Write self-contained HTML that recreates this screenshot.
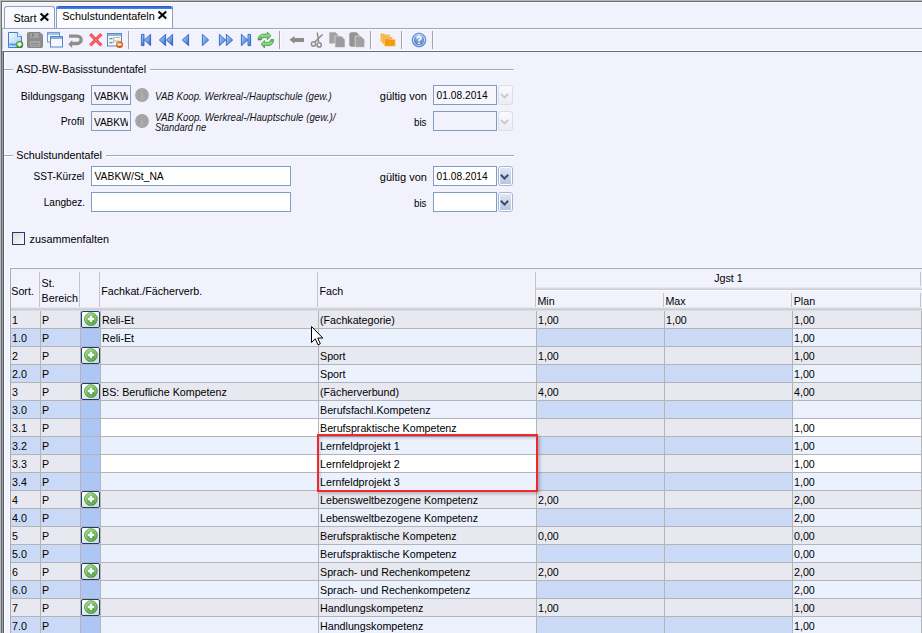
<!DOCTYPE html>
<html><head><meta charset="utf-8"><style>
*{margin:0;padding:0;box-sizing:border-box}
html,body{width:922px;height:633px;overflow:hidden;background:#f2f2fd;font-family:"Liberation Sans",sans-serif;color:#000}
.t{position:absolute;white-space:nowrap;line-height:20px}
.r{position:absolute}
svg{position:absolute;overflow:visible}
</style></head>
<body>
<div class="r" style="left:0px;top:0px;width:922px;height:1px;background:#b8b8b8;"></div>
<div class="r" style="left:0px;top:1px;width:922px;height:1px;background:#6e6e6e;"></div>
<div class="r" style="left:0px;top:0px;width:1px;height:633px;background:#b8b8b8;"></div>
<div class="r" style="left:1px;top:1px;width:1px;height:633px;background:#6e6e6e;"></div>
<div class="r" style="left:2px;top:2px;width:920px;height:1px;background:#fcfcff;"></div>
<div class="r" style="left:2px;top:2px;width:1px;height:50px;background:#fcfcff;"></div>
<div class="r" style="left:4px;top:6px;width:51px;height:22px;background:#f9f9fe;border:1px solid #8fa0ba;border-bottom:none;border-radius:3px 3px 0 0"></div>
<div class="t" style="left:13.6px;top:8.04px;font-size:10.85px;">Start</div>
<div class="r" style="left:56px;top:6px;width:117px;height:22px;background:#fdfdff;border:1px solid #8fa0ba;border-top:none;border-bottom:none"></div>
<div class="r" style="left:56px;top:6px;width:117px;height:3px;background:linear-gradient(#2457c2,#4a86ee);clip-path:polygon(2px 0,calc(100% - 2px) 0,100% 100%,0 100%)"></div>
<div class="t" style="left:62.3px;top:5.93px;font-size:10.88px;">Schulstundentafeln</div>
<div class="r" style="left:2px;top:28px;width:920px;height:1px;background:#98a8c2;"></div>
<div class="r" style="left:2px;top:29px;width:920px;height:1px;background:#fbfbff;"></div>
<svg style="left:39.8px;top:12.8px" width="9" height="8" viewBox="0 0 9 8"><rect x="-1" y="-1" width="11" height="10" fill="#e8e8f0" opacity="0.35"/><path d="M0.6 0.6L8.2 7.4M8.2 0.6L0.6 7.4" stroke="#000" stroke-width="2.05"/></svg>
<svg style="left:157.8px;top:10.8px" width="9" height="8" viewBox="0 0 9 8"><rect x="-1" y="-1" width="11" height="10" fill="#e8e8f0" opacity="0.35"/><path d="M0.6 0.6L8.2 7.4M8.2 0.6L0.6 7.4" stroke="#000" stroke-width="2.05"/></svg>
<div class="r" style="left:2px;top:29px;width:1px;height:22px;background:#c4cde0;"></div>
<div class="r" style="left:2px;top:50px;width:920px;height:1px;background:#fcfcff;"></div>
<div class="r" style="left:2px;top:51px;width:920px;height:1px;background:#6e6e6e;"></div>
<div class="r" style="left:2px;top:52px;width:1px;height:581px;background:#8c9cb8;"></div>
<div class="r" style="left:3px;top:52px;width:1px;height:581px;background:#5e5e5e;"></div>
<div class="r" style="left:4px;top:52px;width:1px;height:581px;background:#fcfcff;"></div>
<div class="r" style="left:128px;top:31px;width:1px;height:18px;background:#a2a2aa;"></div>
<div class="r" style="left:129px;top:31px;width:1px;height:18px;background:#fafaff;"></div>
<div class="r" style="left:279px;top:31px;width:1px;height:18px;background:#a2a2aa;"></div>
<div class="r" style="left:280px;top:31px;width:1px;height:18px;background:#fafaff;"></div>
<div class="r" style="left:370px;top:31px;width:1px;height:18px;background:#a2a2aa;"></div>
<div class="r" style="left:371px;top:31px;width:1px;height:18px;background:#fafaff;"></div>
<div class="r" style="left:401px;top:31px;width:1px;height:18px;background:#a2a2aa;"></div>
<div class="r" style="left:402px;top:31px;width:1px;height:18px;background:#fafaff;"></div>
<div class="r" style="left:432px;top:31px;width:1px;height:18px;background:#a2a2aa;"></div>
<div class="r" style="left:433px;top:31px;width:1px;height:18px;background:#fafaff;"></div>
<svg style="left:8px;top:32px" width="16" height="16" viewBox="0 0 16 16"><defs><linearGradient id="gdoc" x1="0" y1="0" x2="1" y2="1"><stop offset="0" stop-color="#f2f8fe"/><stop offset="1" stop-color="#a6ccf2"/></linearGradient><radialGradient id="ggr" cx="0.4" cy="0.35" r="0.7"><stop offset="0" stop-color="#7cc35e"/><stop offset="1" stop-color="#2e7d1e"/></radialGradient></defs><path d="M0.5 0.5H9.5L13.5 4.5V15.5H0.5Z" fill="url(#gdoc)" stroke="#3f7dd0"/><path d="M9.5 0.5V4.5H13.5" fill="#fff" stroke="#3f7dd0" stroke-width="0.8"/><rect x="1.5" y="11.5" width="9" height="2" fill="#4d9ae8"/><circle cx="11.6" cy="12.4" r="3.6" fill="url(#ggr)"/><path d="M11.6 10.3V14.5M9.5 12.4H13.7" stroke="#fff" stroke-width="1.6"/></svg>
<svg style="left:27px;top:32px" width="16" height="16" viewBox="0 0 16 16"><path d="M0.5 1.5Q0.5 0.5 1.5 0.5H13L15.5 3V14.5Q15.5 15.5 14.5 15.5H1.5Q0.5 15.5 0.5 14.5Z" fill="#8e8e8e" stroke="#858585"/><rect x="3.5" y="1" width="8" height="5" fill="#a4a4a4"/><rect x="5" y="1.5" width="1.5" height="3" fill="#7a7a7a"/><rect x="3" y="9" width="10" height="6" fill="#a6a6a6"/><rect x="4" y="11" width="8" height="1" fill="#8a8a8a"/><rect x="4" y="13" width="8" height="1" fill="#909090"/></svg>
<svg style="left:47px;top:32px" width="16" height="16" viewBox="0 0 16 16"><rect x="0.5" y="0.5" width="12" height="9.5" fill="#f3f6fb" stroke="#6f9ad6"/><rect x="1" y="1" width="11" height="2" fill="#a6c3ea"/><rect x="3.5" y="4.5" width="12" height="10.5" fill="#f5f7fb" stroke="#5586cc"/><rect x="4" y="5" width="11" height="2" fill="#86ade2"/></svg>
<svg style="left:68px;top:32px" width="16" height="16" viewBox="0 0 16 16"><path d="M1 4.2H9.5A3.65 3.65 0 0 1 9.5 11.5H3.5" fill="none" stroke="#8e8e8e" stroke-width="3.3"/><path d="M0.2 12.3L4.2 8V16Z" fill="#8e8e8e"/></svg>
<svg style="left:88px;top:32px" width="16" height="16" viewBox="0 0 16 16"><path d="M2.2 2.2L13.3 13.3M13.3 2.2L2.2 13.3" stroke="#f04a55" stroke-width="3.2"/><path d="M2.7 2.7L12.8 12.8M12.8 2.7L2.7 12.8" stroke="#ff8a90" stroke-width="0.8"/></svg>
<svg style="left:107px;top:32px" width="16" height="16" viewBox="0 0 16 16"><defs><radialGradient id="gor" cx="0.4" cy="0.35" r="0.7"><stop offset="0" stop-color="#f8a048"/><stop offset="1" stop-color="#c84a08"/></radialGradient></defs><rect x="0.5" y="1.5" width="14" height="12.5" fill="#f6f4ee" stroke="#5b87c5"/><rect x="1" y="2" width="13" height="2" fill="#8fb3e3"/><rect x="2.5" y="6" width="3" height="1.2" fill="#4f7fc4"/><rect x="2.5" y="10" width="3" height="1.2" fill="#4f7fc4"/><path d="M6.5 11V5.5H13M6.5 9H12" fill="none" stroke="#a8a8a8" stroke-width="0.8"/><circle cx="12.5" cy="12.5" r="3.5" fill="url(#gor)"/><rect x="10.5" y="11.8" width="4" height="1.5" fill="#fff"/></svg>
<svg style="left:140px;top:32px" width="16" height="16" viewBox="0 0 16 16"><defs><linearGradient id="gnav" x1="0" y1="0" x2="1" y2="1"><stop offset="0" stop-color="#b4d0f4"/><stop offset="0.5" stop-color="#7aa6e6"/><stop offset="1" stop-color="#2456c0"/></linearGradient></defs><rect x="1.4" y="2.4" width="2.6" height="11.2" fill="url(#gnav)" stroke="#2e62c8" stroke-width="0.9" stroke-linejoin="round"/><path d="M10.6 2.3V13.7L4.3 8Z" fill="url(#gnav)" stroke="#2e62c8" stroke-width="0.9" stroke-linejoin="round"/></svg>
<svg style="left:158px;top:32px" width="16" height="16" viewBox="0 0 16 16"><path d="M7.6 2.3V13.7L1.3 8Z" fill="url(#gnav)" stroke="#2e62c8" stroke-width="0.9" stroke-linejoin="round"/><path d="M14.6 2.3V13.7L8.3 8Z" fill="url(#gnav)" stroke="#2e62c8" stroke-width="0.9" stroke-linejoin="round"/></svg>
<svg style="left:179px;top:32px" width="16" height="16" viewBox="0 0 16 16"><path d="M9.6 2.3V13.7L3.3 8Z" fill="url(#gnav)" stroke="#2e62c8" stroke-width="0.9" stroke-linejoin="round"/></svg>
<svg style="left:200px;top:32px" width="16" height="16" viewBox="0 0 16 16"><path d="M2.4 2.3V13.7L8.7 8Z" fill="url(#gnav)" stroke="#2e62c8" stroke-width="0.9" stroke-linejoin="round"/></svg>
<svg style="left:218px;top:32px" width="16" height="16" viewBox="0 0 16 16"><path d="M1.4 2.3V13.7L7.7 8Z" fill="url(#gnav)" stroke="#2e62c8" stroke-width="0.9" stroke-linejoin="round"/><path d="M8.4 2.3V13.7L14.7 8Z" fill="url(#gnav)" stroke="#2e62c8" stroke-width="0.9" stroke-linejoin="round"/></svg>
<svg style="left:240px;top:32px" width="16" height="16" viewBox="0 0 16 16"><path d="M1.4 2.3V13.7L7.7 8Z" fill="url(#gnav)" stroke="#2e62c8" stroke-width="0.9" stroke-linejoin="round"/><rect x="8" y="2.4" width="2.6" height="11.2" fill="url(#gnav)" stroke="#2e62c8" stroke-width="0.9" stroke-linejoin="round"/></svg>
<svg style="left:254px;top:30px" width="24" height="20" viewBox="0 0 24 20"><defs><linearGradient id="grf" x1="0" y1="0" x2="0" y2="1"><stop offset="0" stop-color="#4aa648"/><stop offset="0.45" stop-color="#98d88e"/><stop offset="1" stop-color="#3a963a"/></linearGradient></defs><path d="M4 10Q4.3 4 10 4H13.3V2L17 5.8L13.3 9.8V7.6H10Q7.6 7.6 7.2 10Z" fill="url(#grf)" stroke="#3f9a3c" stroke-width="0.7" stroke-linejoin="round"/><path d="M19.8 9.5Q19.5 15.6 14 15.6H10.5V18L7 14L10.5 10.4V12.3H14Q16.5 12.3 16.8 9.5Z" fill="url(#grf)" stroke="#3f9a3c" stroke-width="0.7" stroke-linejoin="round"/></svg>
<svg style="left:289px;top:32px" width="16" height="16" viewBox="0 0 16 16"><path d="M0.5 7.8L5.5 4V6H15V10H5.5V11.7Z" fill="#8c8c8c"/></svg>
<svg style="left:309px;top:32px" width="16" height="16" viewBox="0 0 16 16"><path d="M8.3 0.5L9.6 10.2M13.7 2.2L5.6 10.4" stroke="#8e8e8e" stroke-width="1.5"/><circle cx="4.5" cy="11.9" r="2.1" fill="none" stroke="#8e8e8e" stroke-width="1.5"/><circle cx="10.2" cy="12.9" r="2.1" fill="none" stroke="#8e8e8e" stroke-width="1.5"/></svg>
<svg style="left:329px;top:32px" width="16" height="16" viewBox="0 0 16 16"><path d="M0.3 0.3H6.5L9.5 3.3V11.5H0.3Z" fill="#a2a2a2"/><path d="M6 4H12.5L16 7.5V15.5H6Z" fill="#9c9c9c" stroke="#f2f2fd" stroke-width="0.6"/></svg>
<svg style="left:349px;top:32px" width="16" height="16" viewBox="0 0 16 16"><path d="M0.3 2.5Q0.3 0.3 2.5 0.3H7.5L10.5 3.3V14.7H2.5Q0.3 14.7 0.3 12.5Z" fill="#949494"/><path d="M6.2 4H12L15.7 7.7V15.3H6.2Z" fill="#a0a0a0" stroke="#f2f2fd" stroke-width="0.6"/></svg>
<svg style="left:380px;top:32px" width="16" height="16" viewBox="0 0 16 16"><path d="M0.5 1.5H4L5 2.5H10V10H0.5Z" fill="#f6b040" stroke="#fde2b0" stroke-width="0.6"/><path d="M2.5 4H6L7 5H12.5V12H2.5Z" fill="#f7a82a" stroke="#fde2b0" stroke-width="0.6"/><path d="M4.3 6.3H8L9 7.3H15.3V14.3H4.3Z" fill="#f39a0c" stroke="#fde2b0" stroke-width="0.6"/></svg>
<svg style="left:411px;top:32px" width="16" height="16" viewBox="0 0 16 16"><defs><radialGradient id="ghelp" cx="0.5" cy="0.3" r="0.75"><stop offset="0" stop-color="#9ec0ec"/><stop offset="1" stop-color="#3a6cb8"/></radialGradient></defs><circle cx="8" cy="8" r="6.9" fill="url(#ghelp)" stroke="#5a88c8" stroke-width="0.8"/><circle cx="8" cy="8" r="5.6" fill="none" stroke="#e4edf9" stroke-width="0.8"/><path d="M6.1 6.4Q6.1 4.4 8 4.4Q9.9 4.4 9.9 6.1Q9.9 7.2 8.6 7.8Q8 8.1 8 9.3" fill="none" stroke="#fff" stroke-width="1.6"/><circle cx="8" cy="11.3" r="0.95" fill="#fff"/></svg>
<div class="r" style="left:4px;top:69px;width:9px;height:1px;background:#a8a8b0;"></div>
<div class="r" style="left:4px;top:70px;width:9px;height:1px;background:#ffffff;"></div>
<div class="r" style="left:150px;top:69px;width:364px;height:1px;background:#a8a8b0;"></div>
<div class="r" style="left:150px;top:70px;width:364px;height:1px;background:#ffffff;"></div>
<div class="t" style="left:16.3px;top:59.22px;font-size:10.63px;">ASD-BW-Basisstundentafel</div>
<div class="r" style="left:4px;top:155px;width:9px;height:1px;background:#a8a8b0;"></div>
<div class="r" style="left:4px;top:156px;width:9px;height:1px;background:#ffffff;"></div>
<div class="r" style="left:106px;top:155px;width:408px;height:1px;background:#a8a8b0;"></div>
<div class="r" style="left:106px;top:156px;width:408px;height:1px;background:#ffffff;"></div>
<div class="t" style="left:16.3px;top:144.97px;font-size:10.77px;">Schulstundentafel</div>
<div class="t" style="left:20.8px;top:86.15px;font-size:10.54px;">Bildungsgang</div>
<div class="r" style="left:91px;top:85px;width:40px;height:20px;background:#f2f2fd;border:1px solid #7f9cc4"></div>
<div class="r" style="left:92px;top:86px;width:36px;height:18px;overflow:hidden"><div class="t" style="left:2.3px;top:0.02px;font-size:10.9px;;transform:scaleX(0.9202);transform-origin:0 0;">VABKW</div>
</div>
<div class="t" style="left:60.7px;top:112.20px;font-size:10.39px;">Profil</div>
<div class="r" style="left:91px;top:111px;width:40px;height:20px;background:#f2f2fd;border:1px solid #7f9cc4"></div>
<div class="r" style="left:92px;top:112px;width:36px;height:18px;overflow:hidden"><div class="t" style="left:2.3px;top:0.02px;font-size:10.9px;;transform:scaleX(0.9202);transform-origin:0 0;">VABKW</div>
</div>
<svg style="left:135px;top:88px" width="14" height="14" viewBox="0 0 14 14"><circle cx="7" cy="7" r="6.9" fill="#a3a3a3"/><circle cx="7" cy="7" r="5.6" fill="none" stroke="#acacac" stroke-width="0.8"/><rect x="6.2" y="3.8" width="1.6" height="1.3" fill="#b6b6b6"/><path d="M5.6 6.2H7.8V10H8.6V10.8H5.5V10H6.3V7H5.6Z" fill="#b6b6b6"/></svg>
<svg style="left:135px;top:114px" width="14" height="14" viewBox="0 0 14 14"><circle cx="7" cy="7" r="6.9" fill="#a3a3a3"/><circle cx="7" cy="7" r="5.6" fill="none" stroke="#acacac" stroke-width="0.8"/><rect x="6.2" y="3.8" width="1.6" height="1.3" fill="#b6b6b6"/><path d="M5.6 6.2H7.8V10H8.6V10.8H5.5V10H6.3V7H5.6Z" fill="#b6b6b6"/></svg>
<div class="t" style="left:155.3px;top:85.53px;font-size:10.6px;color:#141414;font-style:italic;transform:scaleX(0.9132);transform-origin:0 0;">VAB Koop. Werkreal-/Hauptschule (gew.)</div>
<div class="t" style="left:155.3px;top:106.53px;font-size:10.6px;color:#141414;font-style:italic;transform:scaleX(0.9179);transform-origin:0 0;">VAB Koop. Werkreal-/Hauptschule (gew.)/</div>
<div class="t" style="left:155.3px;top:117.33px;font-size:10.6px;color:#141414;font-style:italic;transform:scaleX(0.8858);transform-origin:0 0;">Standard ne</div>
<div class="t" style="left:379.8px;top:86.18px;font-size:11.03px;">gültig von</div>
<div class="r" style="left:433px;top:85px;width:64px;height:20px;background:#f6f6fc;border:1px solid #7f9cc4"></div>
<div class="t" style="left:436.6px;top:85.96px;font-size:10.22px;">01.08.2014</div>
<div class="r" style="left:498px;top:85px;width:15px;height:20px;border:1px solid #dcdce6;border-radius:3px;background:linear-gradient(#fbfbfe,#ececf4)"></div>
<svg style="left:499.5px;top:93px" width="9" height="6" viewBox="0 0 9 6"><path d="M0.8 0.8L4.5 4.5L8.2 0.8" fill="none" stroke="#c8c8d2" stroke-width="1.8"/></svg>
<div class="t" style="left:413.7px;top:112.12px;font-size:11.2px;;transform:scaleX(0.8723);transform-origin:0 0;">bis</div>
<div class="r" style="left:433px;top:111px;width:64px;height:20px;background:#f2f2fd;border:1px solid #7f9cc4"></div>
<div class="r" style="left:498px;top:111px;width:15px;height:20px;border:1px solid #dcdce6;border-radius:3px;background:linear-gradient(#fbfbfe,#ececf4)"></div>
<svg style="left:499.5px;top:119px" width="9" height="6" viewBox="0 0 9 6"><path d="M0.8 0.8L4.5 4.5L8.2 0.8" fill="none" stroke="#c8c8d2" stroke-width="1.8"/></svg>
<div class="t" style="left:33.6px;top:167.32px;font-size:10.04px;">SST-Kürzel</div>
<div class="r" style="left:91px;top:166px;width:200px;height:20px;background:#ffffff;border:1px solid #7f9cc4"></div>
<div class="t" style="left:94.5px;top:167.02px;font-size:10.33px;">VABKW/St_NA</div>
<div class="t" style="left:43.7px;top:193.31px;font-size:10.07px;">Langbez.</div>
<div class="r" style="left:91px;top:192px;width:200px;height:20px;background:#ffffff;border:1px solid #7f9cc4"></div>
<div class="t" style="left:379.8px;top:166.78px;font-size:11.03px;">gültig von</div>
<div class="r" style="left:433px;top:166px;width:64px;height:20px;background:#ffffff;border:1px solid #7f9cc4"></div>
<div class="t" style="left:436.6px;top:166.76px;font-size:10.22px;">01.08.2014</div>
<div class="r" style="left:498px;top:166px;width:15px;height:20px;border:1px solid #a4b4d2;border-radius:3px;background:#fff"></div>
<div class="r" style="left:500px;top:168px;width:11px;height:16px;border-radius:1px;background:linear-gradient(#e0e6f4,#b6c4e3)"></div>
<svg style="left:499.5px;top:174px" width="9" height="6" viewBox="0 0 9 6"><path d="M0.8 0.8L4.5 4.5L8.2 0.8" fill="none" stroke="#3a4e70" stroke-width="2"/></svg>
<div class="t" style="left:413.7px;top:192.92px;font-size:11.2px;;transform:scaleX(0.8723);transform-origin:0 0;">bis</div>
<div class="r" style="left:433px;top:192px;width:64px;height:20px;background:#ffffff;border:1px solid #7f9cc4"></div>
<div class="r" style="left:498px;top:192px;width:15px;height:20px;border:1px solid #a4b4d2;border-radius:3px;background:#fff"></div>
<div class="r" style="left:500px;top:194px;width:11px;height:16px;border-radius:1px;background:linear-gradient(#e0e6f4,#b6c4e3)"></div>
<svg style="left:499.5px;top:200px" width="9" height="6" viewBox="0 0 9 6"><path d="M0.8 0.8L4.5 4.5L8.2 0.8" fill="none" stroke="#3a4e70" stroke-width="2"/></svg>
<div class="r" style="left:12px;top:232px;width:13px;height:13px;border:1px solid #1f3c6e;background:linear-gradient(135deg,#dcdce0,#fafafa)"></div>
<div class="t" style="left:29.6px;top:229.05px;font-size:10.82px;">zusammenfalten</div>
<div class="r" style="left:9px;top:267px;width:913px;height:1px;background:#fbfbff;"></div>
<div class="r" style="left:9px;top:267px;width:1px;height:366px;background:#fbfbff;"></div>
<div class="r" style="left:10px;top:268px;width:912px;height:1px;background:#a8a8b0;"></div>
<div class="r" style="left:10px;top:268px;width:1px;height:365px;background:#a8a8b0;"></div>
<div class="r" style="left:39px;top:272px;width:1px;height:35px;background:#c4c4cc;"></div>
<div class="r" style="left:79px;top:272px;width:1px;height:35px;background:#c4c4cc;"></div>
<div class="r" style="left:99px;top:272px;width:1px;height:35px;background:#c4c4cc;"></div>
<div class="r" style="left:317px;top:272px;width:1px;height:35px;background:#c4c4cc;"></div>
<div class="r" style="left:535px;top:272px;width:1px;height:35px;background:#c4c4cc;"></div>
<div class="r" style="left:663px;top:293px;width:1px;height:14px;background:#c4c4cc;"></div>
<div class="r" style="left:791px;top:293px;width:1px;height:14px;background:#c4c4cc;"></div>
<div class="r" style="left:920px;top:293px;width:1px;height:14px;background:#c4c4cc;"></div>
<div class="r" style="left:920px;top:272px;width:1px;height:14px;background:#c4c4cc;"></div>
<div class="r" style="left:536px;top:287px;width:386px;height:1px;background:#e6e6ee;"></div>
<div class="r" style="left:536px;top:288px;width:386px;height:1px;background:#d8d8e0;"></div>
<div class="r" style="left:536px;top:289px;width:386px;height:1px;background:#cfcfd7;"></div>
<div class="r" style="left:536px;top:290px;width:386px;height:1px;background:#f8f8fd;"></div>
<div class="r" style="left:11px;top:307px;width:911px;height:1px;background:#e6e6ee;"></div>
<div class="r" style="left:11px;top:308px;width:911px;height:1px;background:#d6d6de;"></div>
<div class="r" style="left:11px;top:309px;width:911px;height:1px;background:#cacad2;"></div>
<div class="r" style="left:11px;top:310px;width:911px;height:1px;background:#dcdce4;"></div>
<div class="t" style="left:11.3px;top:281.29px;font-size:10.7px;">Sort.</div>
<div class="t" style="left:41.6px;top:273.29px;font-size:10.7px;">St.</div>
<div class="t" style="left:41.6px;top:287.89px;font-size:10.7px;">Bereich</div>
<div class="t" style="left:101.3px;top:281.29px;font-size:10.7px;">Fachkat./Fächerverb.</div>
<div class="t" style="left:319.5px;top:281.29px;font-size:10.7px;">Fach</div>
<div class="t" style="left:678.5px;width:100px;text-align:center;top:268.09px;font-size:10.7px;">Jgst 1</div>
<div class="t" style="left:537.4px;top:291.29px;font-size:10.7px;">Min</div>
<div class="t" style="left:665.4px;top:291.29px;font-size:10.7px;">Max</div>
<div class="t" style="left:793.7px;top:291.29px;font-size:10.7px;">Plan</div>
<div class="r" style="left:11px;top:311px;width:29px;height:17px;background:#e8e8f1;"></div>
<div class="r" style="left:41px;top:311px;width:39px;height:17px;background:#e8e8f1;"></div>
<div class="r" style="left:81px;top:311px;width:19px;height:17px;background:#e8e8f1;"></div>
<div class="r" style="left:101px;top:311px;width:217px;height:17px;background:#e8e8f1;"></div>
<div class="r" style="left:319px;top:311px;width:217px;height:17px;background:#e8e8f1;"></div>
<div class="r" style="left:537px;top:311px;width:127px;height:17px;background:#e8e8f1;"></div>
<div class="r" style="left:665px;top:311px;width:127px;height:17px;background:#e8e8f1;"></div>
<div class="r" style="left:793px;top:311px;width:128px;height:17px;background:#e8e8f1;"></div>
<div class="r" style="left:11px;top:328px;width:911px;height:1px;background:#b4b4b8;"></div>
<div class="t" style="left:12px;top:309.99px;font-size:10.7px;">1</div>
<div class="t" style="left:42px;top:309.99px;font-size:10.7px;">P</div>
<div class="t" style="left:102px;top:309.99px;font-size:10.7px;">Reli-Et</div>
<div class="t" style="left:320px;top:309.99px;font-size:10.7px;">(Fachkategorie)</div>
<div class="t" style="left:538px;top:309.99px;font-size:10.7px;">1,00</div>
<div class="t" style="left:666px;top:309.99px;font-size:10.7px;">1,00</div>
<div class="t" style="left:794px;top:309.99px;font-size:10.7px;">1,00</div>
<div class="r" style="left:81px;top:311px;width:19px;height:17px;border:1px solid #1f3e6c;border-radius:2px;background:linear-gradient(160deg,#ffffff 20%,#d4d5de)"></div>
<svg style="left:83px;top:312px" width="16" height="16" viewBox="0 0 16 16"><defs><linearGradient id="gpl" x1="0.2" y1="0.1" x2="0.7" y2="1"><stop offset="0" stop-color="#98cf88"/><stop offset="0.5" stop-color="#5eb04c"/><stop offset="1" stop-color="#388e2f"/></linearGradient></defs><circle cx="7.9" cy="7.1" r="6.5" fill="url(#gpl)" stroke="#4c9c40" stroke-width="0.7"/><circle cx="7.9" cy="7.1" r="5.1" fill="none" stroke="#c4e6b6" stroke-width="0.7" opacity="0.8"/><rect x="6.8" y="3.8" width="2.4" height="6.4" fill="#fff"/><rect x="4.8" y="5.8" width="6.4" height="2.4" fill="#fff"/></svg>
<div class="r" style="left:11px;top:329px;width:29px;height:17px;background:#cadaf6;"></div>
<div class="r" style="left:41px;top:329px;width:39px;height:17px;background:#cadaf6;"></div>
<div class="r" style="left:81px;top:329px;width:19px;height:17px;background:#adc6f5;"></div>
<div class="r" style="left:101px;top:329px;width:217px;height:17px;background:#ebf1fd;"></div>
<div class="r" style="left:319px;top:329px;width:217px;height:17px;background:#ebf1fd;"></div>
<div class="r" style="left:537px;top:329px;width:127px;height:17px;background:#cadaf6;"></div>
<div class="r" style="left:665px;top:329px;width:127px;height:17px;background:#cadaf6;"></div>
<div class="r" style="left:793px;top:329px;width:128px;height:17px;background:#ebf1fd;"></div>
<div class="r" style="left:11px;top:346px;width:911px;height:1px;background:#b4b4b8;"></div>
<div class="t" style="left:12px;top:327.99px;font-size:10.7px;">1.0</div>
<div class="t" style="left:42px;top:327.99px;font-size:10.7px;">P</div>
<div class="t" style="left:102px;top:327.99px;font-size:10.7px;">Reli-Et</div>
<div class="t" style="left:794px;top:327.99px;font-size:10.7px;">1,00</div>
<div class="r" style="left:11px;top:347px;width:29px;height:17px;background:#e8e8f1;"></div>
<div class="r" style="left:41px;top:347px;width:39px;height:17px;background:#e8e8f1;"></div>
<div class="r" style="left:81px;top:347px;width:19px;height:17px;background:#e8e8f1;"></div>
<div class="r" style="left:101px;top:347px;width:217px;height:17px;background:#e8e8f1;"></div>
<div class="r" style="left:319px;top:347px;width:217px;height:17px;background:#e8e8f1;"></div>
<div class="r" style="left:537px;top:347px;width:127px;height:17px;background:#e8e8f1;"></div>
<div class="r" style="left:665px;top:347px;width:127px;height:17px;background:#e8e8f1;"></div>
<div class="r" style="left:793px;top:347px;width:128px;height:17px;background:#e8e8f1;"></div>
<div class="r" style="left:11px;top:364px;width:911px;height:1px;background:#b4b4b8;"></div>
<div class="t" style="left:12px;top:345.99px;font-size:10.7px;">2</div>
<div class="t" style="left:42px;top:345.99px;font-size:10.7px;">P</div>
<div class="t" style="left:320px;top:345.99px;font-size:10.7px;">Sport</div>
<div class="t" style="left:538px;top:345.99px;font-size:10.7px;">1,00</div>
<div class="t" style="left:794px;top:345.99px;font-size:10.7px;">1,00</div>
<div class="r" style="left:81px;top:347px;width:19px;height:17px;border:1px solid #1f3e6c;border-radius:2px;background:linear-gradient(160deg,#ffffff 20%,#d4d5de)"></div>
<svg style="left:83px;top:348px" width="16" height="16" viewBox="0 0 16 16"><defs><linearGradient id="gpl" x1="0.2" y1="0.1" x2="0.7" y2="1"><stop offset="0" stop-color="#98cf88"/><stop offset="0.5" stop-color="#5eb04c"/><stop offset="1" stop-color="#388e2f"/></linearGradient></defs><circle cx="7.9" cy="7.1" r="6.5" fill="url(#gpl)" stroke="#4c9c40" stroke-width="0.7"/><circle cx="7.9" cy="7.1" r="5.1" fill="none" stroke="#c4e6b6" stroke-width="0.7" opacity="0.8"/><rect x="6.8" y="3.8" width="2.4" height="6.4" fill="#fff"/><rect x="4.8" y="5.8" width="6.4" height="2.4" fill="#fff"/></svg>
<div class="r" style="left:11px;top:365px;width:29px;height:17px;background:#cadaf6;"></div>
<div class="r" style="left:41px;top:365px;width:39px;height:17px;background:#cadaf6;"></div>
<div class="r" style="left:81px;top:365px;width:19px;height:17px;background:#adc6f5;"></div>
<div class="r" style="left:101px;top:365px;width:217px;height:17px;background:#ebf1fd;"></div>
<div class="r" style="left:319px;top:365px;width:217px;height:17px;background:#ebf1fd;"></div>
<div class="r" style="left:537px;top:365px;width:127px;height:17px;background:#cadaf6;"></div>
<div class="r" style="left:665px;top:365px;width:127px;height:17px;background:#cadaf6;"></div>
<div class="r" style="left:793px;top:365px;width:128px;height:17px;background:#ebf1fd;"></div>
<div class="r" style="left:11px;top:382px;width:911px;height:1px;background:#b4b4b8;"></div>
<div class="t" style="left:12px;top:363.99px;font-size:10.7px;">2.0</div>
<div class="t" style="left:42px;top:363.99px;font-size:10.7px;">P</div>
<div class="t" style="left:320px;top:363.99px;font-size:10.7px;">Sport</div>
<div class="t" style="left:794px;top:363.99px;font-size:10.7px;">1,00</div>
<div class="r" style="left:11px;top:383px;width:29px;height:17px;background:#e8e8f1;"></div>
<div class="r" style="left:41px;top:383px;width:39px;height:17px;background:#e8e8f1;"></div>
<div class="r" style="left:81px;top:383px;width:19px;height:17px;background:#e8e8f1;"></div>
<div class="r" style="left:101px;top:383px;width:217px;height:17px;background:#e8e8f1;"></div>
<div class="r" style="left:319px;top:383px;width:217px;height:17px;background:#e8e8f1;"></div>
<div class="r" style="left:537px;top:383px;width:127px;height:17px;background:#e8e8f1;"></div>
<div class="r" style="left:665px;top:383px;width:127px;height:17px;background:#e8e8f1;"></div>
<div class="r" style="left:793px;top:383px;width:128px;height:17px;background:#e8e8f1;"></div>
<div class="r" style="left:11px;top:400px;width:911px;height:1px;background:#b4b4b8;"></div>
<div class="t" style="left:12px;top:381.99px;font-size:10.7px;">3</div>
<div class="t" style="left:42px;top:381.99px;font-size:10.7px;">P</div>
<div class="t" style="left:102px;top:381.99px;font-size:10.7px;">BS: Berufliche Kompetenz</div>
<div class="t" style="left:320px;top:381.99px;font-size:10.7px;">(Fächerverbund)</div>
<div class="t" style="left:538px;top:381.99px;font-size:10.7px;">4,00</div>
<div class="t" style="left:794px;top:381.99px;font-size:10.7px;">4,00</div>
<div class="r" style="left:81px;top:383px;width:19px;height:17px;border:1px solid #1f3e6c;border-radius:2px;background:linear-gradient(160deg,#ffffff 20%,#d4d5de)"></div>
<svg style="left:83px;top:384px" width="16" height="16" viewBox="0 0 16 16"><defs><linearGradient id="gpl" x1="0.2" y1="0.1" x2="0.7" y2="1"><stop offset="0" stop-color="#98cf88"/><stop offset="0.5" stop-color="#5eb04c"/><stop offset="1" stop-color="#388e2f"/></linearGradient></defs><circle cx="7.9" cy="7.1" r="6.5" fill="url(#gpl)" stroke="#4c9c40" stroke-width="0.7"/><circle cx="7.9" cy="7.1" r="5.1" fill="none" stroke="#c4e6b6" stroke-width="0.7" opacity="0.8"/><rect x="6.8" y="3.8" width="2.4" height="6.4" fill="#fff"/><rect x="4.8" y="5.8" width="6.4" height="2.4" fill="#fff"/></svg>
<div class="r" style="left:11px;top:401px;width:29px;height:17px;background:#cadaf6;"></div>
<div class="r" style="left:41px;top:401px;width:39px;height:17px;background:#cadaf6;"></div>
<div class="r" style="left:81px;top:401px;width:19px;height:17px;background:#adc6f5;"></div>
<div class="r" style="left:101px;top:401px;width:217px;height:17px;background:#ebf1fd;"></div>
<div class="r" style="left:319px;top:401px;width:217px;height:17px;background:#ebf1fd;"></div>
<div class="r" style="left:537px;top:401px;width:127px;height:17px;background:#cadaf6;"></div>
<div class="r" style="left:665px;top:401px;width:127px;height:17px;background:#cadaf6;"></div>
<div class="r" style="left:793px;top:401px;width:128px;height:17px;background:#ebf1fd;"></div>
<div class="r" style="left:11px;top:418px;width:911px;height:1px;background:#b4b4b8;"></div>
<div class="t" style="left:12px;top:399.99px;font-size:10.7px;">3.0</div>
<div class="t" style="left:42px;top:399.99px;font-size:10.7px;">P</div>
<div class="t" style="left:320px;top:399.99px;font-size:10.7px;">Berufsfachl.Kompetenz</div>
<div class="r" style="left:11px;top:419px;width:29px;height:17px;background:#e8e8f1;"></div>
<div class="r" style="left:41px;top:419px;width:39px;height:17px;background:#e8e8f1;"></div>
<div class="r" style="left:81px;top:419px;width:19px;height:17px;background:#adc6f5;"></div>
<div class="r" style="left:101px;top:419px;width:217px;height:17px;background:#ffffff;"></div>
<div class="r" style="left:319px;top:419px;width:217px;height:17px;background:#ffffff;"></div>
<div class="r" style="left:537px;top:419px;width:127px;height:17px;background:#e8e8f1;"></div>
<div class="r" style="left:665px;top:419px;width:127px;height:17px;background:#e8e8f1;"></div>
<div class="r" style="left:793px;top:419px;width:128px;height:17px;background:#ffffff;"></div>
<div class="r" style="left:11px;top:436px;width:911px;height:1px;background:#b4b4b8;"></div>
<div class="t" style="left:12px;top:417.99px;font-size:10.7px;">3.1</div>
<div class="t" style="left:42px;top:417.99px;font-size:10.7px;">P</div>
<div class="t" style="left:320px;top:417.99px;font-size:10.7px;">Berufspraktische Kompetenz</div>
<div class="t" style="left:794px;top:417.99px;font-size:10.7px;">1,00</div>
<div class="r" style="left:11px;top:437px;width:29px;height:17px;background:#cadaf6;"></div>
<div class="r" style="left:41px;top:437px;width:39px;height:17px;background:#cadaf6;"></div>
<div class="r" style="left:81px;top:437px;width:19px;height:17px;background:#adc6f5;"></div>
<div class="r" style="left:101px;top:437px;width:217px;height:17px;background:#ebf1fd;"></div>
<div class="r" style="left:319px;top:437px;width:217px;height:17px;background:#ebf1fd;"></div>
<div class="r" style="left:537px;top:437px;width:127px;height:17px;background:#cadaf6;"></div>
<div class="r" style="left:665px;top:437px;width:127px;height:17px;background:#cadaf6;"></div>
<div class="r" style="left:793px;top:437px;width:128px;height:17px;background:#ebf1fd;"></div>
<div class="r" style="left:11px;top:454px;width:911px;height:1px;background:#b4b4b8;"></div>
<div class="t" style="left:12px;top:435.99px;font-size:10.7px;">3.2</div>
<div class="t" style="left:42px;top:435.99px;font-size:10.7px;">P</div>
<div class="t" style="left:320px;top:435.99px;font-size:10.7px;">Lernfeldprojekt 1</div>
<div class="t" style="left:794px;top:435.99px;font-size:10.7px;">1,00</div>
<div class="r" style="left:11px;top:455px;width:29px;height:17px;background:#e8e8f1;"></div>
<div class="r" style="left:41px;top:455px;width:39px;height:17px;background:#e8e8f1;"></div>
<div class="r" style="left:81px;top:455px;width:19px;height:17px;background:#adc6f5;"></div>
<div class="r" style="left:101px;top:455px;width:217px;height:17px;background:#ffffff;"></div>
<div class="r" style="left:319px;top:455px;width:217px;height:17px;background:#ffffff;"></div>
<div class="r" style="left:537px;top:455px;width:127px;height:17px;background:#e8e8f1;"></div>
<div class="r" style="left:665px;top:455px;width:127px;height:17px;background:#e8e8f1;"></div>
<div class="r" style="left:793px;top:455px;width:128px;height:17px;background:#ffffff;"></div>
<div class="r" style="left:11px;top:472px;width:911px;height:1px;background:#b4b4b8;"></div>
<div class="t" style="left:12px;top:453.99px;font-size:10.7px;">3.3</div>
<div class="t" style="left:42px;top:453.99px;font-size:10.7px;">P</div>
<div class="t" style="left:320px;top:453.99px;font-size:10.7px;">Lernfeldprojekt 2</div>
<div class="t" style="left:794px;top:453.99px;font-size:10.7px;">1,00</div>
<div class="r" style="left:11px;top:473px;width:29px;height:17px;background:#cadaf6;"></div>
<div class="r" style="left:41px;top:473px;width:39px;height:17px;background:#cadaf6;"></div>
<div class="r" style="left:81px;top:473px;width:19px;height:17px;background:#adc6f5;"></div>
<div class="r" style="left:101px;top:473px;width:217px;height:17px;background:#ebf1fd;"></div>
<div class="r" style="left:319px;top:473px;width:217px;height:17px;background:#ebf1fd;"></div>
<div class="r" style="left:537px;top:473px;width:127px;height:17px;background:#cadaf6;"></div>
<div class="r" style="left:665px;top:473px;width:127px;height:17px;background:#cadaf6;"></div>
<div class="r" style="left:793px;top:473px;width:128px;height:17px;background:#ebf1fd;"></div>
<div class="r" style="left:11px;top:490px;width:911px;height:1px;background:#b4b4b8;"></div>
<div class="t" style="left:12px;top:471.99px;font-size:10.7px;">3.4</div>
<div class="t" style="left:42px;top:471.99px;font-size:10.7px;">P</div>
<div class="t" style="left:320px;top:471.99px;font-size:10.7px;">Lernfeldprojekt 3</div>
<div class="t" style="left:794px;top:471.99px;font-size:10.7px;">1,00</div>
<div class="r" style="left:11px;top:491px;width:29px;height:17px;background:#e8e8f1;"></div>
<div class="r" style="left:41px;top:491px;width:39px;height:17px;background:#e8e8f1;"></div>
<div class="r" style="left:81px;top:491px;width:19px;height:17px;background:#e8e8f1;"></div>
<div class="r" style="left:101px;top:491px;width:217px;height:17px;background:#e8e8f1;"></div>
<div class="r" style="left:319px;top:491px;width:217px;height:17px;background:#e8e8f1;"></div>
<div class="r" style="left:537px;top:491px;width:127px;height:17px;background:#e8e8f1;"></div>
<div class="r" style="left:665px;top:491px;width:127px;height:17px;background:#e8e8f1;"></div>
<div class="r" style="left:793px;top:491px;width:128px;height:17px;background:#e8e8f1;"></div>
<div class="r" style="left:11px;top:508px;width:911px;height:1px;background:#b4b4b8;"></div>
<div class="t" style="left:12px;top:489.99px;font-size:10.7px;">4</div>
<div class="t" style="left:42px;top:489.99px;font-size:10.7px;">P</div>
<div class="t" style="left:320px;top:489.99px;font-size:10.7px;">Lebensweltbezogene Kompetenz</div>
<div class="t" style="left:538px;top:489.99px;font-size:10.7px;">2,00</div>
<div class="t" style="left:794px;top:489.99px;font-size:10.7px;">2,00</div>
<div class="r" style="left:81px;top:491px;width:19px;height:17px;border:1px solid #1f3e6c;border-radius:2px;background:linear-gradient(160deg,#ffffff 20%,#d4d5de)"></div>
<svg style="left:83px;top:492px" width="16" height="16" viewBox="0 0 16 16"><defs><linearGradient id="gpl" x1="0.2" y1="0.1" x2="0.7" y2="1"><stop offset="0" stop-color="#98cf88"/><stop offset="0.5" stop-color="#5eb04c"/><stop offset="1" stop-color="#388e2f"/></linearGradient></defs><circle cx="7.9" cy="7.1" r="6.5" fill="url(#gpl)" stroke="#4c9c40" stroke-width="0.7"/><circle cx="7.9" cy="7.1" r="5.1" fill="none" stroke="#c4e6b6" stroke-width="0.7" opacity="0.8"/><rect x="6.8" y="3.8" width="2.4" height="6.4" fill="#fff"/><rect x="4.8" y="5.8" width="6.4" height="2.4" fill="#fff"/></svg>
<div class="r" style="left:11px;top:509px;width:29px;height:17px;background:#cadaf6;"></div>
<div class="r" style="left:41px;top:509px;width:39px;height:17px;background:#cadaf6;"></div>
<div class="r" style="left:81px;top:509px;width:19px;height:17px;background:#adc6f5;"></div>
<div class="r" style="left:101px;top:509px;width:217px;height:17px;background:#ebf1fd;"></div>
<div class="r" style="left:319px;top:509px;width:217px;height:17px;background:#ebf1fd;"></div>
<div class="r" style="left:537px;top:509px;width:127px;height:17px;background:#cadaf6;"></div>
<div class="r" style="left:665px;top:509px;width:127px;height:17px;background:#cadaf6;"></div>
<div class="r" style="left:793px;top:509px;width:128px;height:17px;background:#ebf1fd;"></div>
<div class="r" style="left:11px;top:526px;width:911px;height:1px;background:#b4b4b8;"></div>
<div class="t" style="left:12px;top:507.99px;font-size:10.7px;">4.0</div>
<div class="t" style="left:42px;top:507.99px;font-size:10.7px;">P</div>
<div class="t" style="left:320px;top:507.99px;font-size:10.7px;">Lebensweltbezogene Kompetenz</div>
<div class="t" style="left:794px;top:507.99px;font-size:10.7px;">2,00</div>
<div class="r" style="left:11px;top:527px;width:29px;height:17px;background:#e8e8f1;"></div>
<div class="r" style="left:41px;top:527px;width:39px;height:17px;background:#e8e8f1;"></div>
<div class="r" style="left:81px;top:527px;width:19px;height:17px;background:#e8e8f1;"></div>
<div class="r" style="left:101px;top:527px;width:217px;height:17px;background:#e8e8f1;"></div>
<div class="r" style="left:319px;top:527px;width:217px;height:17px;background:#e8e8f1;"></div>
<div class="r" style="left:537px;top:527px;width:127px;height:17px;background:#e8e8f1;"></div>
<div class="r" style="left:665px;top:527px;width:127px;height:17px;background:#e8e8f1;"></div>
<div class="r" style="left:793px;top:527px;width:128px;height:17px;background:#e8e8f1;"></div>
<div class="r" style="left:11px;top:544px;width:911px;height:1px;background:#b4b4b8;"></div>
<div class="t" style="left:12px;top:525.99px;font-size:10.7px;">5</div>
<div class="t" style="left:42px;top:525.99px;font-size:10.7px;">P</div>
<div class="t" style="left:320px;top:525.99px;font-size:10.7px;">Berufspraktische Kompetenz</div>
<div class="t" style="left:538px;top:525.99px;font-size:10.7px;">0,00</div>
<div class="t" style="left:794px;top:525.99px;font-size:10.7px;">0,00</div>
<div class="r" style="left:81px;top:527px;width:19px;height:17px;border:1px solid #1f3e6c;border-radius:2px;background:linear-gradient(160deg,#ffffff 20%,#d4d5de)"></div>
<svg style="left:83px;top:528px" width="16" height="16" viewBox="0 0 16 16"><defs><linearGradient id="gpl" x1="0.2" y1="0.1" x2="0.7" y2="1"><stop offset="0" stop-color="#98cf88"/><stop offset="0.5" stop-color="#5eb04c"/><stop offset="1" stop-color="#388e2f"/></linearGradient></defs><circle cx="7.9" cy="7.1" r="6.5" fill="url(#gpl)" stroke="#4c9c40" stroke-width="0.7"/><circle cx="7.9" cy="7.1" r="5.1" fill="none" stroke="#c4e6b6" stroke-width="0.7" opacity="0.8"/><rect x="6.8" y="3.8" width="2.4" height="6.4" fill="#fff"/><rect x="4.8" y="5.8" width="6.4" height="2.4" fill="#fff"/></svg>
<div class="r" style="left:11px;top:545px;width:29px;height:17px;background:#cadaf6;"></div>
<div class="r" style="left:41px;top:545px;width:39px;height:17px;background:#cadaf6;"></div>
<div class="r" style="left:81px;top:545px;width:19px;height:17px;background:#adc6f5;"></div>
<div class="r" style="left:101px;top:545px;width:217px;height:17px;background:#ebf1fd;"></div>
<div class="r" style="left:319px;top:545px;width:217px;height:17px;background:#ebf1fd;"></div>
<div class="r" style="left:537px;top:545px;width:127px;height:17px;background:#cadaf6;"></div>
<div class="r" style="left:665px;top:545px;width:127px;height:17px;background:#cadaf6;"></div>
<div class="r" style="left:793px;top:545px;width:128px;height:17px;background:#ebf1fd;"></div>
<div class="r" style="left:11px;top:562px;width:911px;height:1px;background:#b4b4b8;"></div>
<div class="t" style="left:12px;top:543.99px;font-size:10.7px;">5.0</div>
<div class="t" style="left:42px;top:543.99px;font-size:10.7px;">P</div>
<div class="t" style="left:320px;top:543.99px;font-size:10.7px;">Berufspraktische Kompetenz</div>
<div class="t" style="left:794px;top:543.99px;font-size:10.7px;">0,00</div>
<div class="r" style="left:11px;top:563px;width:29px;height:17px;background:#e8e8f1;"></div>
<div class="r" style="left:41px;top:563px;width:39px;height:17px;background:#e8e8f1;"></div>
<div class="r" style="left:81px;top:563px;width:19px;height:17px;background:#e8e8f1;"></div>
<div class="r" style="left:101px;top:563px;width:217px;height:17px;background:#e8e8f1;"></div>
<div class="r" style="left:319px;top:563px;width:217px;height:17px;background:#e8e8f1;"></div>
<div class="r" style="left:537px;top:563px;width:127px;height:17px;background:#e8e8f1;"></div>
<div class="r" style="left:665px;top:563px;width:127px;height:17px;background:#e8e8f1;"></div>
<div class="r" style="left:793px;top:563px;width:128px;height:17px;background:#e8e8f1;"></div>
<div class="r" style="left:11px;top:580px;width:911px;height:1px;background:#b4b4b8;"></div>
<div class="t" style="left:12px;top:561.99px;font-size:10.7px;">6</div>
<div class="t" style="left:42px;top:561.99px;font-size:10.7px;">P</div>
<div class="t" style="left:320px;top:561.99px;font-size:10.7px;">Sprach- und Rechenkompetenz</div>
<div class="t" style="left:538px;top:561.99px;font-size:10.7px;">2,00</div>
<div class="t" style="left:794px;top:561.99px;font-size:10.7px;">2,00</div>
<div class="r" style="left:81px;top:563px;width:19px;height:17px;border:1px solid #1f3e6c;border-radius:2px;background:linear-gradient(160deg,#ffffff 20%,#d4d5de)"></div>
<svg style="left:83px;top:564px" width="16" height="16" viewBox="0 0 16 16"><defs><linearGradient id="gpl" x1="0.2" y1="0.1" x2="0.7" y2="1"><stop offset="0" stop-color="#98cf88"/><stop offset="0.5" stop-color="#5eb04c"/><stop offset="1" stop-color="#388e2f"/></linearGradient></defs><circle cx="7.9" cy="7.1" r="6.5" fill="url(#gpl)" stroke="#4c9c40" stroke-width="0.7"/><circle cx="7.9" cy="7.1" r="5.1" fill="none" stroke="#c4e6b6" stroke-width="0.7" opacity="0.8"/><rect x="6.8" y="3.8" width="2.4" height="6.4" fill="#fff"/><rect x="4.8" y="5.8" width="6.4" height="2.4" fill="#fff"/></svg>
<div class="r" style="left:11px;top:581px;width:29px;height:17px;background:#cadaf6;"></div>
<div class="r" style="left:41px;top:581px;width:39px;height:17px;background:#cadaf6;"></div>
<div class="r" style="left:81px;top:581px;width:19px;height:17px;background:#adc6f5;"></div>
<div class="r" style="left:101px;top:581px;width:217px;height:17px;background:#ebf1fd;"></div>
<div class="r" style="left:319px;top:581px;width:217px;height:17px;background:#ebf1fd;"></div>
<div class="r" style="left:537px;top:581px;width:127px;height:17px;background:#cadaf6;"></div>
<div class="r" style="left:665px;top:581px;width:127px;height:17px;background:#cadaf6;"></div>
<div class="r" style="left:793px;top:581px;width:128px;height:17px;background:#ebf1fd;"></div>
<div class="r" style="left:11px;top:598px;width:911px;height:1px;background:#b4b4b8;"></div>
<div class="t" style="left:12px;top:579.99px;font-size:10.7px;">6.0</div>
<div class="t" style="left:42px;top:579.99px;font-size:10.7px;">P</div>
<div class="t" style="left:320px;top:579.99px;font-size:10.7px;">Sprach- und Rechenkompetenz</div>
<div class="t" style="left:794px;top:579.99px;font-size:10.7px;">2,00</div>
<div class="r" style="left:11px;top:599px;width:29px;height:17px;background:#e8e8f1;"></div>
<div class="r" style="left:41px;top:599px;width:39px;height:17px;background:#e8e8f1;"></div>
<div class="r" style="left:81px;top:599px;width:19px;height:17px;background:#e8e8f1;"></div>
<div class="r" style="left:101px;top:599px;width:217px;height:17px;background:#e8e8f1;"></div>
<div class="r" style="left:319px;top:599px;width:217px;height:17px;background:#e8e8f1;"></div>
<div class="r" style="left:537px;top:599px;width:127px;height:17px;background:#e8e8f1;"></div>
<div class="r" style="left:665px;top:599px;width:127px;height:17px;background:#e8e8f1;"></div>
<div class="r" style="left:793px;top:599px;width:128px;height:17px;background:#e8e8f1;"></div>
<div class="r" style="left:11px;top:616px;width:911px;height:1px;background:#b4b4b8;"></div>
<div class="t" style="left:12px;top:597.99px;font-size:10.7px;">7</div>
<div class="t" style="left:42px;top:597.99px;font-size:10.7px;">P</div>
<div class="t" style="left:320px;top:597.99px;font-size:10.7px;">Handlungskompetenz</div>
<div class="t" style="left:538px;top:597.99px;font-size:10.7px;">1,00</div>
<div class="t" style="left:794px;top:597.99px;font-size:10.7px;">1,00</div>
<div class="r" style="left:81px;top:599px;width:19px;height:17px;border:1px solid #1f3e6c;border-radius:2px;background:linear-gradient(160deg,#ffffff 20%,#d4d5de)"></div>
<svg style="left:83px;top:600px" width="16" height="16" viewBox="0 0 16 16"><defs><linearGradient id="gpl" x1="0.2" y1="0.1" x2="0.7" y2="1"><stop offset="0" stop-color="#98cf88"/><stop offset="0.5" stop-color="#5eb04c"/><stop offset="1" stop-color="#388e2f"/></linearGradient></defs><circle cx="7.9" cy="7.1" r="6.5" fill="url(#gpl)" stroke="#4c9c40" stroke-width="0.7"/><circle cx="7.9" cy="7.1" r="5.1" fill="none" stroke="#c4e6b6" stroke-width="0.7" opacity="0.8"/><rect x="6.8" y="3.8" width="2.4" height="6.4" fill="#fff"/><rect x="4.8" y="5.8" width="6.4" height="2.4" fill="#fff"/></svg>
<div class="r" style="left:11px;top:617px;width:29px;height:17px;background:#cadaf6;"></div>
<div class="r" style="left:41px;top:617px;width:39px;height:17px;background:#cadaf6;"></div>
<div class="r" style="left:81px;top:617px;width:19px;height:17px;background:#adc6f5;"></div>
<div class="r" style="left:101px;top:617px;width:217px;height:17px;background:#ebf1fd;"></div>
<div class="r" style="left:319px;top:617px;width:217px;height:17px;background:#ebf1fd;"></div>
<div class="r" style="left:537px;top:617px;width:127px;height:17px;background:#cadaf6;"></div>
<div class="r" style="left:665px;top:617px;width:127px;height:17px;background:#cadaf6;"></div>
<div class="r" style="left:793px;top:617px;width:128px;height:17px;background:#ebf1fd;"></div>
<div class="r" style="left:11px;top:634px;width:911px;height:1px;background:#b4b4b8;"></div>
<div class="t" style="left:12px;top:615.99px;font-size:10.7px;">7.0</div>
<div class="t" style="left:42px;top:615.99px;font-size:10.7px;">P</div>
<div class="t" style="left:320px;top:615.99px;font-size:10.7px;">Handlungskompetenz</div>
<div class="t" style="left:794px;top:615.99px;font-size:10.7px;">1,00</div>
<div class="r" style="left:40px;top:311px;width:1px;height:322px;background:#b4b4b8;"></div>
<div class="r" style="left:80px;top:311px;width:1px;height:322px;background:#b4b4b8;"></div>
<div class="r" style="left:100px;top:311px;width:1px;height:322px;background:#b4b4b8;"></div>
<div class="r" style="left:318px;top:311px;width:1px;height:322px;background:#b4b4b8;"></div>
<div class="r" style="left:536px;top:311px;width:1px;height:322px;background:#b4b4b8;"></div>
<div class="r" style="left:664px;top:311px;width:1px;height:322px;background:#b4b4b8;"></div>
<div class="r" style="left:792px;top:311px;width:1px;height:322px;background:#b4b4b8;"></div>
<div class="r" style="left:921px;top:311px;width:1px;height:322px;background:#b4b4b8;"></div>
<div class="r" style="left:317px;top:434px;width:221px;height:58px;border:2px solid #f2262c;box-shadow:2px 2px 3px rgba(0,0,0,0.22), inset 2px 3px 3px -1px rgba(0,0,0,0.2)"></div>
<svg style="left:311px;top:326px" width="13" height="20" viewBox="0 0 13 20"><path d="M0.5 0.5V16.5L4.3 12.8L7 18.8L9.3 17.8L6.8 12H11.8Z" fill="#fff" stroke="#000" stroke-width="1"/></svg>

</body></html>
